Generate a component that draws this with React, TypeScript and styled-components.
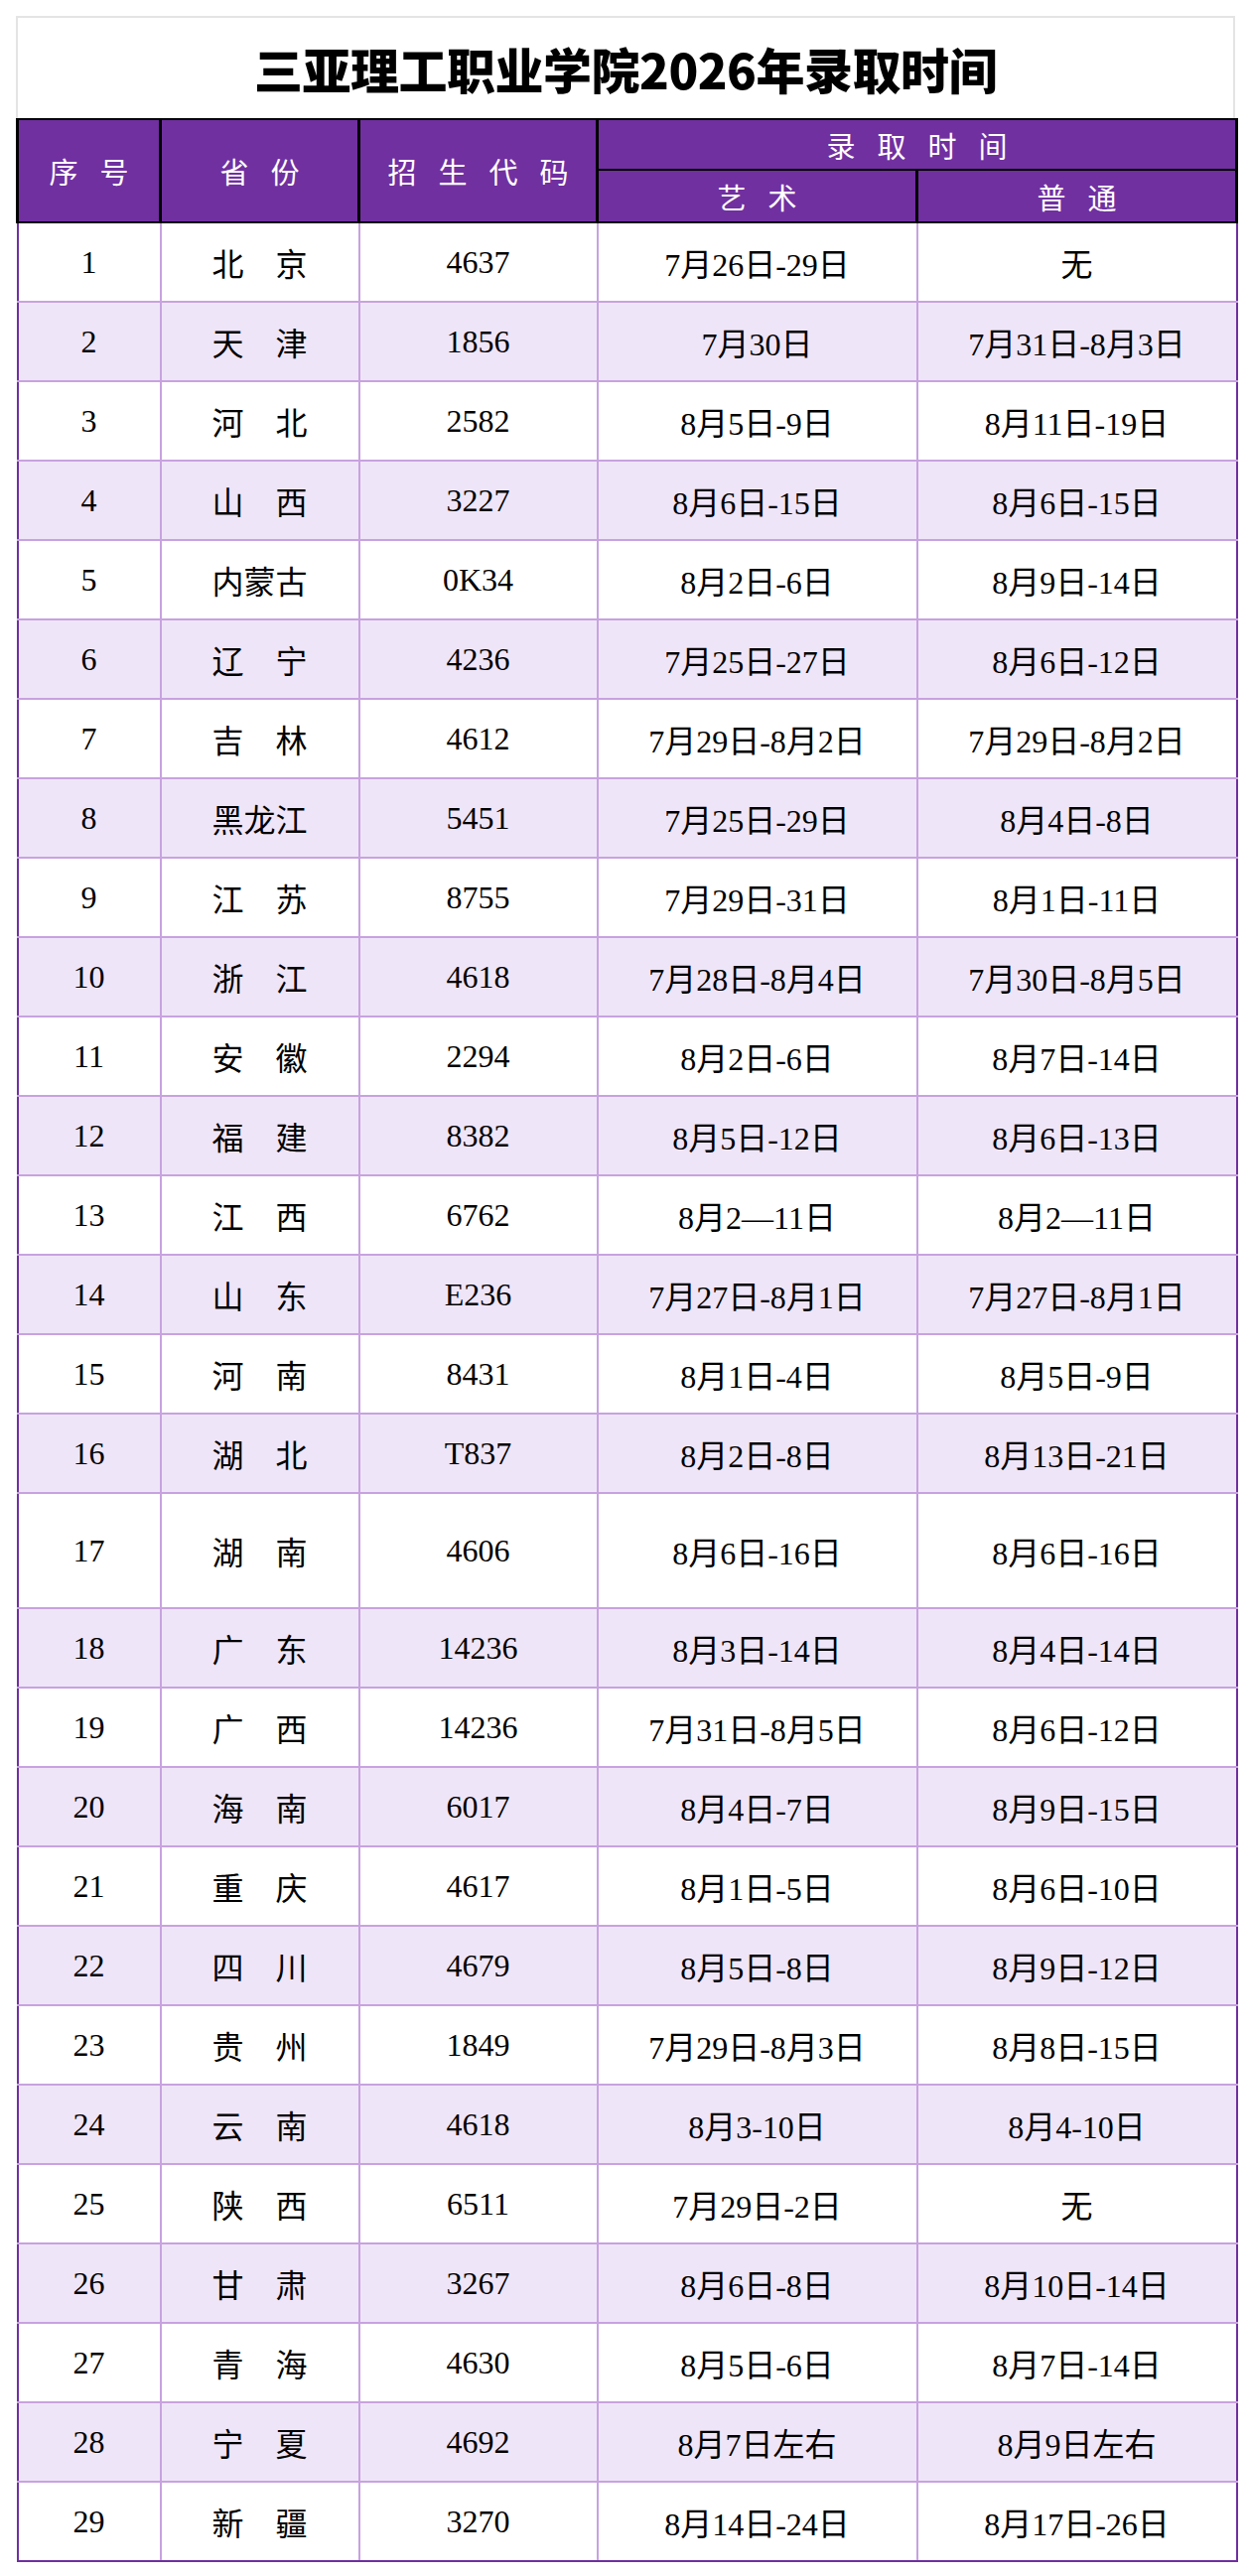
import styled, { createGlobalStyle } from 'styled-components'

const GlobalStyle = createGlobalStyle`
  html, body {
    margin: 0;
    padding: 0;
    background: #ffffff;
  }
`

const ROWS: [string, string, string, string][] = [
  ['北　京', '4637', '7月26日-29日', '无'],
  ['天　津', '1856', '7月30日', '7月31日-8月3日'],
  ['河　北', '2582', '8月5日-9日', '8月11日-19日'],
  ['山　西', '3227', '8月6日-15日', '8月6日-15日'],
  ['内蒙古', '0K34', '8月2日-6日', '8月9日-14日'],
  ['辽　宁', '4236', '7月25日-27日', '8月6日-12日'],
  ['吉　林', '4612', '7月29日-8月2日', '7月29日-8月2日'],
  ['黑龙江', '5451', '7月25日-29日', '8月4日-8日'],
  ['江　苏', '8755', '7月29日-31日', '8月1日-11日'],
  ['浙　江', '4618', '7月28日-8月4日', '7月30日-8月5日'],
  ['安　徽', '2294', '8月2日-6日', '8月7日-14日'],
  ['福　建', '8382', '8月5日-12日', '8月6日-13日'],
  ['江　西', '6762', '8月2—11日', '8月2—11日'],
  ['山　东', 'E236', '7月27日-8月1日', '7月27日-8月1日'],
  ['河　南', '8431', '8月1日-4日', '8月5日-9日'],
  ['湖　北', 'T837', '8月2日-8日', '8月13日-21日'],
  ['湖　南', '4606', '8月6日-16日', '8月6日-16日'],
  ['广　东', '14236', '8月3日-14日', '8月4日-14日'],
  ['广　西', '14236', '7月31日-8月5日', '8月6日-12日'],
  ['海　南', '6017', '8月4日-7日', '8月9日-15日'],
  ['重　庆', '4617', '8月1日-5日', '8月6日-10日'],
  ['四　川', '4679', '8月5日-8日', '8月9日-12日'],
  ['贵　州', '1849', '7月29日-8月3日', '8月8日-15日'],
  ['云　南', '4618', '8月3-10日', '8月4-10日'],
  ['陕　西', '6511', '7月29日-2日', '无'],
  ['甘　肃', '3267', '8月6日-8日', '8月10日-14日'],
  ['青　海', '4630', '8月5日-6日', '8月7日-14日'],
  ['宁　夏', '4692', '8月7日左右', '8月9日左右'],
  ['新　疆', '3270', '8月14日-24日', '8月17日-26日'],
]

const TALL_ROW = 17

const Page = styled.div`
  padding: 16px 16px 16px;
  width: 1228px;
`

const TitleBox = styled.div`
  height: 101px;
  border: 2px solid #e4e4e4;
  border-bottom: none;
  display: flex;
  align-items: center;
  justify-content: center;

  h1 {
    margin: 0;
    font-family: 'Noto Sans CJK SC', 'Noto Sans', sans-serif;
    font-weight: 900;
    font-size: 49px;
    letter-spacing: -0.5px;
    color: #000;
  }
`

const Table = styled.table`
  width: 1228px;
  border-collapse: collapse;
  table-layout: fixed;
  font-family: 'Liberation Serif', 'Noto Sans CJK SC', serif;
`

const HeadCell = styled.th<{ $h?: number }>`
  background: #7030a0;
  color: #ffffff;
  font-weight: 400;
  font-size: 29px;
  letter-spacing: 22px;
  text-indent: 22px;
  border: 2px solid #000;
  border-left-width: 3px;
  border-right-width: 3px;
  padding: 0;
  height: ${(p) => p.$h ?? 49}px;
  white-space: nowrap;
`

const Row = styled.tr<{ $alt: boolean; $tall: boolean }>`
  height: ${(p) => (p.$tall ? 116 : 80)}px;
  background: ${(p) => (p.$alt ? '#efe5f8' : '#ffffff')};

  &:last-child td {
    border-bottom-color: #7030a0;
  }
`

const Cell = styled.td`
  border: 2px solid #c8a2e0;
  padding: 0;
  text-align: center;
  vertical-align: middle;
  font-size: 32px;
  color: #000;
  white-space: nowrap;

  &:first-child {
    border-left-color: #7030a0;
  }
  &:last-child {
    border-right-color: #7030a0;
  }
`

export default function App() {
  return (
    <>
      <GlobalStyle />
      <Page>
        <TitleBox>
          <h1>三亚理工职业学院2026年录取时间</h1>
        </TitleBox>
        <Table>
          <colgroup>
            <col style={{ width: 144 }} />
            <col style={{ width: 200 }} />
            <col style={{ width: 240 }} />
            <col style={{ width: 322 }} />
            <col style={{ width: 322 }} />
          </colgroup>
          <thead>
            <tr>
              <HeadCell rowSpan={2}>序号</HeadCell>
              <HeadCell rowSpan={2}>省份</HeadCell>
              <HeadCell rowSpan={2}>招生代码</HeadCell>
              <HeadCell colSpan={2}>录取时间</HeadCell>
            </tr>
            <tr>
              <HeadCell $h={51}>艺术</HeadCell>
              <HeadCell $h={51}>普通</HeadCell>
            </tr>
          </thead>
          <tbody>
            {ROWS.map(([province, code, art, normal], i) => (
              <Row key={i} $alt={i % 2 === 1} $tall={i + 1 === TALL_ROW}>
                <Cell>{i + 1}</Cell>
                <Cell>{province}</Cell>
                <Cell>{code}</Cell>
                <Cell>{art}</Cell>
                <Cell>{normal}</Cell>
              </Row>
            ))}
          </tbody>
        </Table>
      </Page>
    </>
  )
}
